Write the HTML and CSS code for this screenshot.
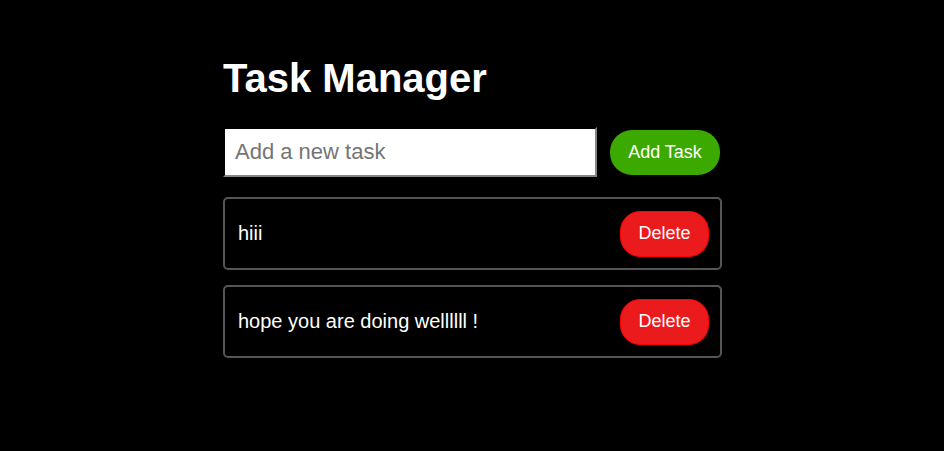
FILE: index.html
```html
<!DOCTYPE html>
<html lang="en">
<head>
<meta charset="utf-8">
<title>Task Manager</title>
<link rel="stylesheet" href="styles.css">
</head>
<body>
<main class="app">
  <h1 class="title">Task Manager</h1>
  <div class="add-row">
    <input class="task-input" type="text" placeholder="Add a new task">
    <button class="add-btn">Add Task</button>
  </div>
  <ul class="task-list">
    <li class="task-item"><span class="task-text">hiii</span><button class="delete-btn">Delete</button></li>
    <li class="task-item"><span class="task-text">hope you are doing wellllll !</span><button class="delete-btn">Delete</button></li>
  </ul>
</main>
</body>
</html>
```

FILE: styles.css
```css
html, body {
  margin: 0;
  padding: 0;
  background: #000;
  color: #fff;
  font-family: "Liberation Sans", Arial, sans-serif;
}
body {
  padding-left: 1px;
}
.app {
  width: 499px;
  margin: 0 auto;
  padding-top: 55px;
}
.title {
  margin: 0 0 26px;
  font-size: 40px;
  font-weight: bold;
  line-height: 46px;
}
.add-row {
  display: flex;
  align-items: center;
  gap: 13px;
}
.task-input {
  box-sizing: border-box;
  width: 374px;
  height: 50px;
  padding: 0 10px;
  font-family: "Liberation Sans", Arial, sans-serif;
  font-size: 22px;
  color: #000;
  background: #fff;
  border: 2px inset #767676;
  border-color: #3b3b3b #858585 #858585 #3b3b3b;
  outline: none;
}
.task-input::placeholder {
  color: #757575;
}
.add-btn {
  box-sizing: border-box;
  width: 110px;
  height: 45px;
  padding: 0 18px;
  border: none;
  border-radius: 22px;
  background: #3ca900;
  color: #fff;
  font-family: "Liberation Sans", Arial, sans-serif;
  font-size: 18px;
}
.task-list {
  list-style: none;
  margin: 20px 0 0;
  padding: 0;
  display: flex;
  flex-direction: column;
  gap: 15px;
}
.task-item {
  box-sizing: border-box;
  height: 73px;
  display: flex;
  align-items: center;
  justify-content: space-between;
  padding: 0 11px 0 13px;
  border: 2px solid #555;
  border-radius: 5px;
}
.task-text {
  font-size: 20px;
}
.delete-btn {
  box-sizing: border-box;
  width: 89px;
  height: 46px;
  padding: 0;
  border: 1px solid #ff0000;
  border-radius: 20px;
  background: #ea1a1d;
  color: #fff;
  font-family: "Liberation Sans", Arial, sans-serif;
  font-size: 18px;
}
```
